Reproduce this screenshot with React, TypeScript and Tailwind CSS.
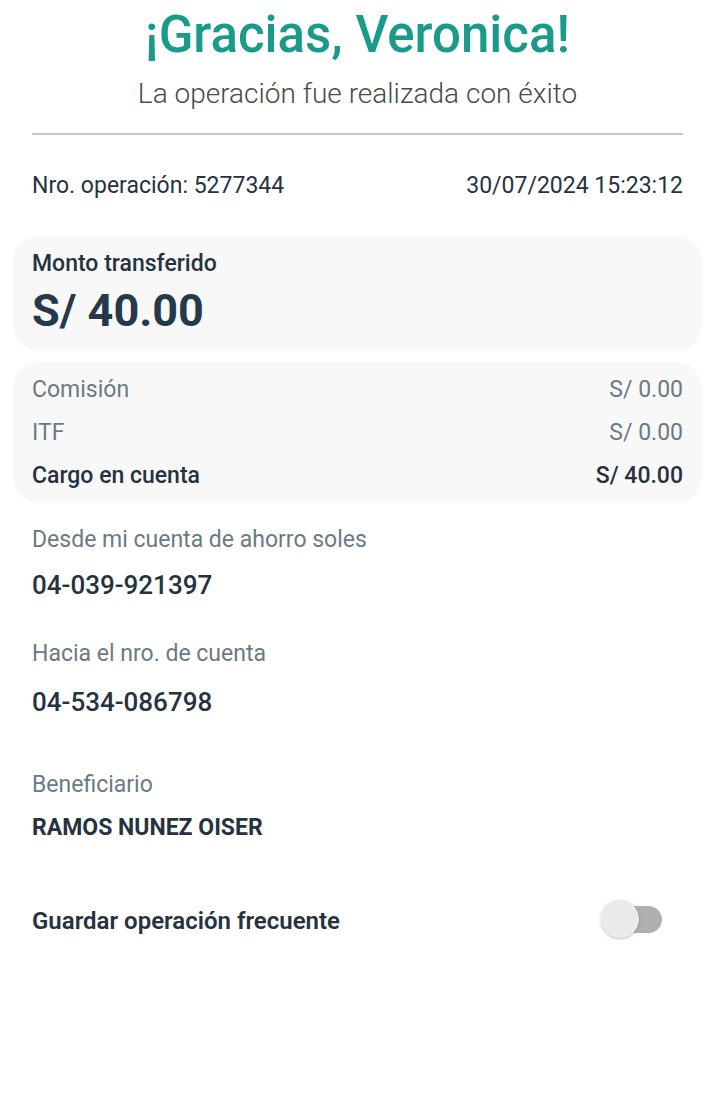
import React from "react";

export default function App() {
  const font = { fontFamily: "Roboto, 'Noto Sans', sans-serif" };
  return (
    <div className="w-[715px] h-[1100px] bg-white" style={font}>
      <div className="px-[32px] pt-[5px]">
        <h1 className="text-center text-[51px] leading-[60px] font-medium text-[#1a9a89]">
          ¡Gracias, Veronica!
        </h1>
        <p className="mt-[12px] text-center text-[28px] leading-[34px] font-light text-[#4a4a4a]">
          La operación fue realizada con éxito
        </p>
        <div className="mt-[22px] h-[2px] bg-[#c8c8c8]" />
        <div className="mt-[36px] flex justify-between text-[23px] leading-[30px] text-[#26323f]">
          <span>Nro. operación: 5277344</span>
          <span>30/07/2024 15:23:12</span>
        </div>
        <div className="mt-[35px] -mx-[19px] px-[19px] rounded-[26px] bg-[#f8f8f8] pt-[13px] pb-[14px]">
          <div className="text-[23px] leading-[30px] font-medium text-[#26323f]">Monto transferido</div>
          <div className="mt-[6px] text-[45px] leading-[52px] font-bold text-[#26394a]">S/ 40.00</div>
        </div>
        <div className="mt-[11px] -mx-[19px] px-[19px] rounded-[26px] bg-[#f8f8f8] pt-[13px] pb-[12px] text-[23px] leading-[30px]">
          <div className="flex justify-between text-[#6b7a84]">
            <span>Comisión</span>
            <span>S/ 0.00</span>
          </div>
          <div className="mt-[13px] flex justify-between text-[#6b7a84]">
            <span>ITF</span>
            <span>S/ 0.00</span>
          </div>
          <div className="mt-[13px] flex justify-between font-medium text-[#26323f]">
            <span>Cargo en cuenta</span>
            <span>S/ 40.00</span>
          </div>
        </div>
        <div className="mt-[22px] text-[23px] leading-[30px] text-[#6b7a84]">Desde mi cuenta de ahorro soles</div>
        <div className="mt-[14px] text-[26px] leading-[32px] font-medium text-[#26323f]">04-039-921397</div>
        <div className="mt-[38px] text-[23px] leading-[30px] text-[#6b7a84]">Hacia el nro. de cuenta</div>
        <div className="mt-[17px] text-[26px] leading-[32px] font-medium text-[#26323f]">04-534-086798</div>
        <div className="mt-[52px] text-[23px] leading-[30px] text-[#6b7a84]">Beneficiario</div>
        <div className="mt-[13px] text-[23px] leading-[30px] font-bold text-[#26323f]">RAMOS NUNEZ OISER</div>
        <div className="mt-[63px] flex items-center justify-between">
          <span className="text-[24px] leading-[30px] font-semibold text-[#26323f]">Guardar operación frecuente</span>
          <div className="relative mr-[21px] h-[27px] w-[51px] -translate-y-[2px]">
            <div className="absolute left-[10px] top-0 h-[27px] w-[41px] rounded-full bg-[#b0b0b0]" />
            <div className="absolute left-[-10px] top-[-6px] h-[38px] w-[38px] rounded-full bg-[#eaeaea] shadow-[0_1px_3px_rgba(0,0,0,0.25)]" />
          </div>
        </div>
      </div>
    </div>
  );
}
